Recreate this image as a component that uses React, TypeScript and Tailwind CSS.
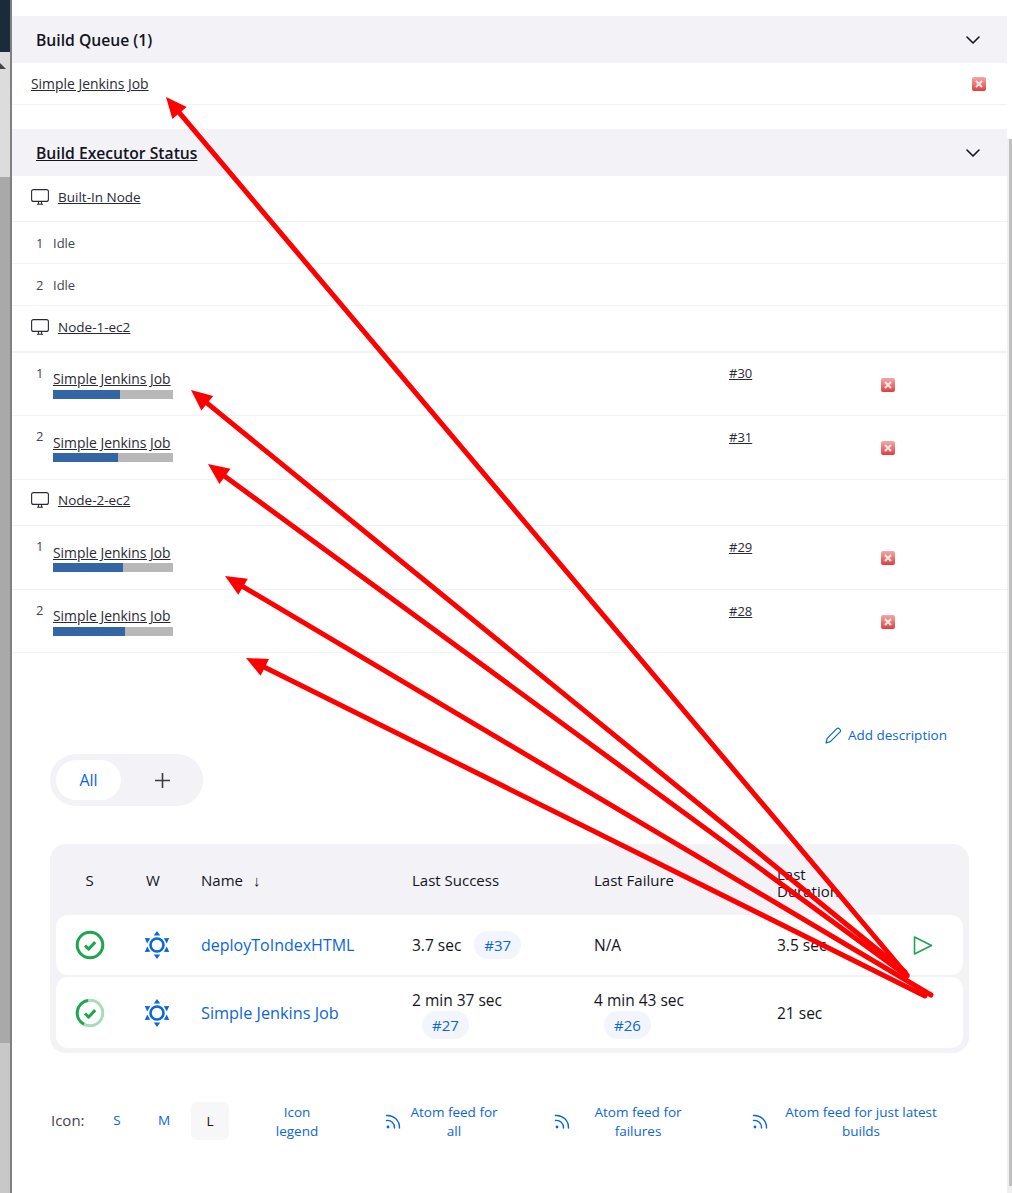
const FONT = "font-['Open_Sans','Noto_Sans',sans-serif]";
const COLS = "grid-cols-[67px_78px_211px_182px_183px_115px_1fr]";

function Monitor() {
  return (
    <svg width="18" height="17" viewBox="0 0 18 17" fill="none" stroke="#2a2a35" strokeWidth="1.1" className="shrink-0">
      <rect x="0.6" y="0.6" width="16.8" height="11.8" rx="2" />
      <path d="M6 15.2h6M7.5 13v2M10.5 13v2" />
    </svg>
  );
}

function StopButton() {
  return (
    <span className="flex h-[14px] w-[14px] items-center justify-center rounded-[2px] bg-gradient-to-b from-[#f0a8aa] to-[#dc3a42]">
      <svg width="8" height="8" viewBox="0 0 8 8" stroke="#fbe9e9" strokeWidth="2">
        <path d="M1 1l6 6M7 1l-6 6" />
      </svg>
    </span>
  );
}

function Chevron() {
  return (
    <svg width="14" height="8" viewBox="0 0 14 8" fill="none" stroke="#14141f" strokeWidth="1.6" strokeLinecap="round" strokeLinejoin="round">
      <path d="M1 1l6 6 6-6" />
    </svg>
  );
}

function PanelHeader({ title, underline }: { title: string; underline?: boolean }) {
  return (
    <div className="flex h-[47px] items-center justify-between bg-[#f2f2f7] pl-[24px] pr-[27px]">
      <span className={`pt-[2px] text-[15.7px] font-semibold text-[#14141f] ${underline ? "underline" : ""}`}>{title}</span>
      <Chevron />
    </div>
  );
}

function NodeRow({ name, box, thick }: { name: string; box: string; thick?: boolean }) {
  return (
    <div className={`flex items-center gap-[9px] pl-[19px] ${box} ${thick ? "border-b-2" : "border-b"} border-[#f2f2f6]`}>
      <Monitor />
      <a className="text-[13.5px] text-[#2a2a35] underline">{name}</a>
    </div>
  );
}

function IdleRow({ n }: { n: number }) {
  return (
    <div className="flex h-[42px] items-center border-b border-[#f2f2f6] pl-[24px] pt-[2px] text-[13px] text-[#44444f]">
      <span className="w-[17px]">{n}</span>
      <span>Idle</span>
    </div>
  );
}

function BuildRow({ n, pct, build, short, linkTop }: { n: number; pct: number; build: string; short?: boolean; linkTop: string }) {
  return (
    <div className={`flex border-b border-[#f2f2f6] pl-[24px] ${short ? "h-[63px]" : "h-[64px]"}`}>
      <span className="w-[17px] pt-[11px] text-[13px] text-[#44444f]">{n}</span>
      <div className={`w-[676px] ${short ? "pt-[17px]" : "pt-[18px]"}`}>
        <a className="block text-[13.9px] leading-[18px] text-[#2a2a35] underline">Simple Jenkins Job</a>
        <div className={`h-[9px] w-[120px] bg-[#b8b8b8] ${short ? "mt-[2px]" : "mt-[1px]"}`}>
          <div className="h-full bg-[#3465a4]" style={{ width: `${pct}%` }} />
        </div>
      </div>
      <a className={`w-[152px] text-[13px] text-[#2a2a35] underline ${linkTop}`}>{build}</a>
      <div className="pt-[25px]">
        <StopButton />
      </div>
    </div>
  );
}

function SuccessIcon({ partial }: { partial?: boolean }) {
  return (
    <svg width="30" height="30" viewBox="0 0 30 30" fill="none">
      <circle cx="15" cy="15" r="12.8" stroke={partial ? "#a8dcb9" : "#1ea64f"} strokeWidth="3" />
      {partial && <path d="M13 2.4A12.8 12.8 0 0 0 9 26.3" stroke="#1ea64f" strokeWidth="3" />}
      <path d="M10 15.5l3.6 3.6 6.6-7" stroke="#1ea64f" strokeWidth="3" strokeLinejoin="round" />
    </svg>
  );
}

function WeatherIcon() {
  return (
    <svg width="26" height="30" viewBox="0 0 26 30" fill="#0b66d9">
      <circle cx="13" cy="15" r="6.5" fill="none" stroke="#0b66d9" strokeWidth="2.6" />
      <path d="M13 1l3.2 4.4h-6.4zM13 29l-3.2-4.4h6.4zM0.8 8l5.4 0.2-3 5.4zM25.2 8l-5.4 0.2 3 5.4zM0.8 22l2.4-5.4 3 5.2zM25.2 22l-2.4-5.4-3 5.2z" />
    </svg>
  );
}

function RssIcon() {
  return (
    <svg width="17" height="18" viewBox="0 0 17 18" fill="none" stroke="#0b66d9" strokeWidth="1.4" strokeLinecap="round" className="shrink-0">
      <circle cx="3" cy="15" r="1.4" fill="#0b66d9" stroke="none" />
      <path d="M1.5 8.5a7 7 0 0 1 8 7.5M1.5 3.5a12 12 0 0 1 13 12.5" />
    </svg>
  );
}

function Pill({ children }: { children: string }) {
  return <span className="inline-block h-[28px] rounded-full bg-[#f2f5fb] px-[10px] text-[15px] leading-[28px] text-[#0b66d9]">{children}</span>;
}

function FeedLink({ children, w, ml }: { children: React.ReactNode; w: string; ml: string }) {
  return (
    <div className={`flex items-center ${ml}`}>
      <RssIcon />
      <a className={`pt-[2px] text-center text-[13.5px] font-medium leading-[19px] text-[#0b66d9] ${w}`}>{children}</a>
    </div>
  );
}

export default function App() {
  return (
    <div className={`relative flex h-[1193px] w-[1012px] overflow-hidden bg-white ${FONT}`}>
      <div className="relative flex w-[12px] shrink-0 flex-col border-r-2 border-[#808080] bg-[#dcdcdc]">
        <div className="h-[52px] bg-[#1c2b3c]" />
        <div className="h-[125px]" />
        <div className="h-[866px] bg-[#a9a9a9]" />
        <div className="flex-1 bg-[#c8c8c8]" />
        <span className="absolute left-0 top-[63px] h-0 w-0 border-b-[6px] border-r-[6px] border-b-[#444] border-r-transparent" />
      </div>

      <div className="w-[995px] shrink-0 pt-[16px]">
        <PanelHeader title="Build Queue (1)" />
        <div className="flex h-[42px] items-center justify-between border-b border-[#f2f2f6] pl-[19px] pr-[21px]">
          <a className="pt-[2px] text-[13.9px] text-[#2a2a35] underline">Simple Jenkins Job</a>
          <StopButton />
        </div>

        <div className="mt-[24px]">
          <PanelHeader title="Build Executor Status" underline />
        </div>
        <NodeRow name="Built-In Node" box="h-[46px] pb-[2px]" />
        <IdleRow n={1} />
        <IdleRow n={2} />
        <NodeRow name="Node-1-ec2" box="h-[47px] pb-[2px]" thick />
        <BuildRow n={1} pct={56} build="#30" short linkTop="pt-[11px]" />
        <BuildRow n={2} pct={54} build="#31" linkTop="pt-[12px]" />
        <NodeRow name="Node-2-ec2" box="h-[46px] pb-[4px]" />
        <BuildRow n={1} pct={58} build="#29" linkTop="pt-[12px]" />
        <BuildRow n={2} pct={60} build="#28" short linkTop="pt-[12px]" />

        <div className="flex justify-end pr-[60px] pt-[72px]">
          <a className="flex items-center gap-[6px] text-[13.5px] font-medium text-[#0b66d9]">
            <svg width="17" height="17" viewBox="0 0 17 17" fill="none" stroke="#0b66d9" strokeWidth="1.2" strokeLinejoin="round">
              <path d="M1 16l1.2-4.6L11.8 1.6a1.6 1.6 0 0 1 2.3 0l1 1a1.6 1.6 0 0 1 0 2.3L5.4 14.6z" />
            </svg>
            Add description
          </a>
        </div>

        <div className="ml-[38px] mt-[9px] flex h-[52px] w-[153px] items-center rounded-full bg-[#f2f2f7] py-[6px] pl-[6px]">
          <span className="flex h-[40px] w-[65px] shrink-0 items-center justify-center rounded-full bg-white text-[16px] font-medium text-[#0b66d9]">All</span>
          <span className="flex w-[82px] shrink-0 justify-center">
            <svg width="15" height="15" viewBox="0 0 15 15" stroke="#3a3a45" strokeWidth="1.6">
              <path d="M7.5 0v15M0 7.5h15" />
            </svg>
          </span>
        </div>

        <div className="ml-[38px] mt-[38px] w-[919px] rounded-[16px] bg-[#f2f2f7] px-[6px] pb-[5px]">
          <div className={`grid h-[71px] ${COLS} items-center text-[15px] text-[#14141f]`}>
            <span className="text-center">S</span>
            <span className="pl-[23px]">W</span>
            <span>Name<span className="ml-[10px]">↓</span></span>
            <span>Last Success</span>
            <span>Last Failure</span>
            <span className="pt-[6px] leading-[17px]">Last<br />Duration</span>
          </div>
          <div className={`grid h-[60px] ${COLS} items-center rounded-[12px] bg-white text-[15.5px] text-[#14141f]`}>
            <div className="flex justify-center pl-[1px]"><SuccessIcon /></div>
            <div className="pl-[21px]"><WeatherIcon /></div>
            <a className="text-[16px] font-medium text-[#0b66d9]">deployToIndexHTML</a>
            <div className="flex items-center gap-[13px]">3.7 sec <Pill>#37</Pill></div>
            <span>N/A</span>
            <span>3.5 sec</span>
            <div className="pl-[21px]">
              <svg width="20" height="21" viewBox="0 0 20 21" fill="none" stroke="#1ea64f" strokeWidth="1.6" strokeLinejoin="round">
                <path d="M1.5 2v17l17-8.5z" />
              </svg>
            </div>
          </div>
          <div className={`mt-[2px] grid h-[71px] ${COLS} items-center rounded-[12px] bg-white text-[15.5px] text-[#14141f]`}>
            <div className="flex justify-center"><SuccessIcon partial /></div>
            <div className="pl-[21px]"><WeatherIcon /></div>
            <a className="text-[16.3px] font-medium text-[#0b66d9]">Simple Jenkins Job</a>
            <div className="pt-[4px] leading-[20px]">2 min 37 sec<div className="mt-[1px] pl-[10px]"><Pill>#27</Pill></div></div>
            <div className="pt-[4px] leading-[20px]">4 min 43 sec<div className="mt-[1px] pl-[10px]"><Pill>#26</Pill></div></div>
            <span className="pt-[2px]">21 sec</span>
          </div>
        </div>

        <div className="ml-[39px] mt-[48px] flex items-center text-[#0b66d9]">
          <span className="w-[34px] pb-[2px] text-[15px] text-[#44444f]">Icon:</span>
          <a className="ml-[28px] w-[8px] pb-[2px] text-center text-[13.5px] font-medium">S</a>
          <a className="ml-[37px] w-[12px] pb-[2px] text-center text-[13.5px] font-medium">M</a>
          <span className="ml-[21px] flex h-[38px] w-[38px] items-center justify-center rounded-[6px] bg-[#f7f7f7] text-[13.5px] font-medium text-[#14141f]">L</span>
          <a className="ml-[38px] w-[60px] pt-[2px] text-center text-[13.5px] font-medium leading-[19px]">Icon<br />legend</a>
          <FeedLink ml="ml-[58px]" w="w-[104px]">Atom feed for<br />all</FeedLink>
          <FeedLink ml="ml-[48px]" w="w-[134px]">Atom feed for<br />failures</FeedLink>
          <FeedLink ml="ml-[47px]" w="w-[184px]">Atom feed for just latest<br />builds</FeedLink>
        </div>
      </div>

      <div className="flex w-[5px] shrink-0 flex-col">
        <div className="h-[139px] bg-white" />
        <div className="flex h-[1047px] bg-[#efefef] pl-[2px]">
          <div className="flex-1 bg-[#c0c0c0]" />
        </div>
        <div className="flex-1 bg-[#efefef]" />
      </div>

      {/* red annotation arrows */}
      <svg className="pointer-events-none absolute left-0 top-0" width="1012" height="1193" viewBox="0 0 1012 1193" fill="none">
        {[
          [907, 975, 166, 97],
          [905, 972, 191, 390],
          [907, 976, 208, 464],
          [931, 995, 225, 576],
          [925, 996, 246, 658],
        ].map(([x1, y1, x2, y2], i) => {
          const a = Math.atan2(y2 - y1, x2 - x1);
          const L = 23;
          const W = 0.42;
          const p = (ang: number) => `${x2 - L * Math.cos(ang)},${y2 - L * Math.sin(ang)}`;
          return (
            <g key={i}>
              <line x1={x1} y1={y1} x2={x2 - 14 * Math.cos(a)} y2={y2 - 14 * Math.sin(a)} stroke="#ff0000" strokeWidth="5" strokeLinecap="round" />
              <polygon points={`${x2},${y2} ${p(a - W)} ${p(a + W)}`} fill="#ff0000" />
            </g>
          );
        })}
      </svg>
    </div>
  );
}
